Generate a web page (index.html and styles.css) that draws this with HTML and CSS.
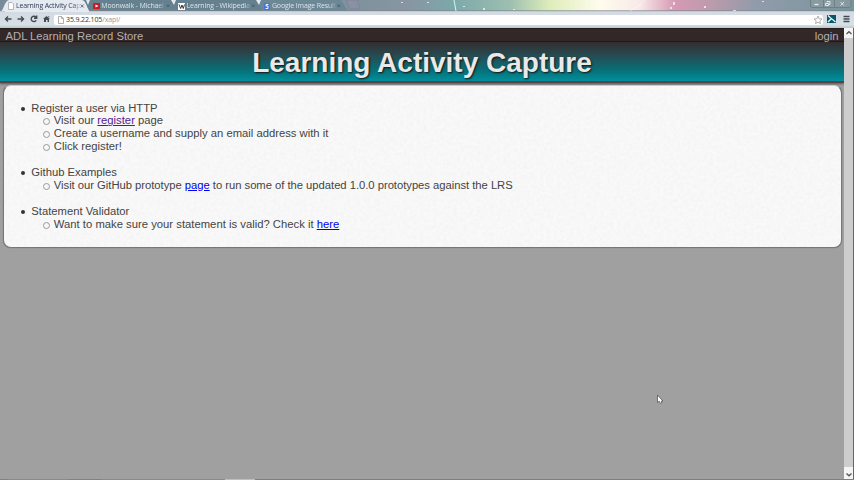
FILE: index.html
```html
<!DOCTYPE html>
<html lang="en">
<head>
<meta charset="utf-8">
<title>Learning Activity Capture</title>
<link rel="stylesheet" href="styles.css">
</head>
<body>
<div class="browser">
  <div class="tabs">
    <svg class="tabs-art" width="854" height="12" viewBox="0 0 854 12" aria-hidden="true">
      <path d="M0 12C4 11 4 1 9 0H82C87 1 87 11 91 12Z" fill="#e6ebf2"/>
      <path d="M91 11.500C87 10 87 2 84 0H172L178 11.500Z" fill="#65818f"/>
      <path d="M178 11.500C174 10 174 2 171 0H257L264 11.500Z" fill="#65818f"/>
      <path d="M264 11.500C260 10 260 2 257 0H341L348 11.500Z" fill="#6c8795"/>
      <path d="M346 0L350 9H360L357 0Z" fill="#8b91a5" stroke="#777f90" stroke-width=".6"/>
      <path d="M86 0L88 5L90 0M171 0L174 5L176 0M256 0L259 5L261 0" fill="#e2eaf0"/>
      <path d="M0 11.500H5M89 11.500H854" stroke="#c3cbd2"/>
      <path d="M89 10.500H854" stroke="#7b878e" stroke-opacity=".6"/>
      <path d="M454 0L456 11" stroke="#d9f5ee"/>
      <g fill="#f5f7f7" fill-opacity=".75"><rect x="401" y="2" width="2" height="1"/><rect x="427" y="2" width="2" height="1"/><rect x="463" y="6" width="2" height="1"/><rect x="483" y="8" width="2" height="2"/><rect x="513" y="9" width="2" height="1"/><rect x="673" y="2" width="2" height="3"/><rect x="670" y="7" width="2" height="2"/><rect x="704" y="6" width="2" height="2"/><rect x="762" y="1" width="2" height="1"/><rect x="733" y="10" width="3" height="1"/></g>
      <path d="M630 11Q640 6 645 0" fill="none" stroke="#fff" stroke-opacity=".5"/>
      <path d="M8.500 2.500H12L13.500 4V9.500H8.500Z" fill="#fff" stroke="#9a9fa5" stroke-width=".7"/>
      <rect x="93" y="3" width="7" height="6" rx="1" fill="#cb171e"/><path d="M95.500 4.500L98.500 6L95.500 7.500Z" fill="#fff"/>
      <rect x="178" y="3" width="7" height="7" fill="#fff"/><path d="M179 4.500L180.700 8.500L182 5L183.300 8.500L184.500 4.500" fill="none" stroke="#222" stroke-width=".9"/>
      <rect x="264" y="3" width="6" height="7" fill="#3c78e8"/><path d="M268.500 4.500H266L266 6H268V8.500H265.500" fill="none" stroke="#fff" stroke-width=".9"/>
      <path d="M80.700 4.500L83.700 7.500M83.700 4.500L80.700 7.500" stroke="#555b63" stroke-width=".9"/>
      <path d="M166.700 4.500L169.200 7M169.200 4.500L166.700 7M252 4.500L254.500 7M254.500 4.500L252 7M337.500 4.500L340 7M340 4.500L337.500 7" stroke="#45545e" stroke-width=".8"/>
      <path d="M810.500 0V6Q810.500 7.500 812 7.500H849Q851 7.500 851 6V0M823.500 0V7M834.500 0V7" fill="#8e9da2" fill-opacity=".6" stroke="#66767b" stroke-width=".7"/>
      <path d="M814.500 4.500H818.500" stroke="#eee" stroke-width="1.300"/>
      <path d="M825.500 3.500H828.500V5.500H825.500ZM827 2.500V1.500H830V4.500H829M840.500 2L844 5.500M844 2L840.500 5.500" fill="none" stroke="#eee" stroke-width=".9"/>
    </svg>
    <span class="tab tab-active">Learning Activity Cap</span>
    <span class="tab">Moonwalk - Michael</span>
    <span class="tab">Learning - Wikipedia</span>
    <span class="tab">Google Image Result</span>
  </div>
  <div class="toolbar">
    <svg class="nav" width="54" height="16" viewBox="0 0 54 16" aria-hidden="true">
      <g fill="none" stroke="#454a50" stroke-width="1.400">
        <path d="M11.500 7H5.500M8 4.500L5.500 7L8 9.500"/>
        <path d="M17.500 7H23.500M21 4.500L23.500 7L21 9.500"/>
        <path d="M36 5.200A2.700 2.700 0 1 0 36.200 8.300M36.700 3.600V6.200H34"/>
      </g>
      <path d="M43 7L46.500 4L50 7H49V10H47.500V8H46V10H44V7ZM48 4H49.200V5.500Z" fill="#454a50"/>
    </svg>
    <div class="address">
      <svg width="8" height="10" viewBox="0 0 8 10" aria-hidden="true"><path d="M1.500 1.500H4.500L6.500 3.500V8.500H1.500ZM4.500 1.500V3.500H6.500" fill="#fff" stroke="#999" stroke-width=".8"/></svg>
      <span class="url">35.9.22.105<span class="path">/xapi/</span></span>
      <svg class="star" width="10" height="10" viewBox="0 0 10 10" aria-hidden="true"><path d="M5 1L6.100 3.700L9 4L6.800 5.900L7.500 8.700L5 7.200L2.500 8.700L3.200 5.900L1 4L3.900 3.700Z" fill="#fff" stroke="#9c9c9c" stroke-width=".8"/></svg>
    </div>
    <svg class="tools" width="31" height="16" viewBox="0 0 31 16" aria-hidden="true">
      <rect x="4" y="3" width="9" height="8" fill="#08566c"/><path d="M5 3.500L7 5.500Q9 7 12.500 10M8.500 6.500L5 10" fill="none" stroke="#eef6f8" stroke-width="1.400"/>
      <path d="M20.500 4.500H26.500M20.500 7H26.500M20.500 9.500H26.500" stroke="#444a50" stroke-width="1.300"/>
    </svg>
  </div>
  <div class="viewport">
    <main class="page">
      <nav class="topbar"><span>ADL Learning Record Store</span><span>login</span></nav>
      <header class="header"><h1>Learning Activity Capture</h1></header>
      <section class="card">
        <svg class="paper" width="100%" height="100%" aria-hidden="true"><filter id="paper" x="0" y="0" width="100%" height="100%"><feTurbulence type="fractalNoise" baseFrequency=".3" numOctaves="3" seed="4"/><feColorMatrix values="0 0 0 0 .5  0 0 0 0 .5  0 0 0 0 .5  .16 0 0 0 -.05"/></filter><rect width="100%" height="100%" filter="url(#paper)"/></svg>
        <ul class="topics">
          <li>Register a user via HTTP
            <ul><li>Visit our <a class="visited" href="#">register</a> page</li><li>Create a username and supply an email address with it</li><li>Click register!</li></ul>
          </li>
          <li>Github Examples
            <ul><li class="wide">Visit our GitHub prototype <a href="#">page</a> to run some of the updated 1.0.0 prototypes against the LRS</li></ul>
          </li>
          <li>Statement Validator
            <ul><li class="loose">Want to make sure your statement is valid? Check it <a href="#">here</a></li></ul>
          </li>
        </ul>
      </section>
    </main>
    <div class="scrollbar">
      <svg width="9" height="10" viewBox="0 0 9 10" aria-hidden="true"><path d="M2.500 6L5 3.700L7.500 6" fill="none" stroke="#555" stroke-width="1.300"/></svg>
      <svg width="9" height="12" viewBox="0 0 9 12" aria-hidden="true"><path d="M2.500 6.500L5 8.800L7.500 6.500" fill="none" stroke="#555" stroke-width="1.300"/></svg>
    </div>
  </div>
  <div class="taskbar"></div>
  <svg class="cursor" width="8" height="11" viewBox="0 0 8 11" aria-hidden="true"><path d="M1.500 1V8.500L3.300 7.300L4.500 9.500L5.800 8.800L5.300 7H7Z" fill="#fff" stroke="#555" stroke-width=".8"/></svg>
</div>
</body>
</html>
```
FILE: styles.css
```css
* { box-sizing: border-box; }
body { margin: 0; overflow: hidden; font-family: "Liberation Sans", Arial, sans-serif; }
.browser { position: relative; display: flex; flex-direction: column; width: 854px; height: 480px; background: #a0a0a0; }
.tabs { position: relative; display: flex; flex: 0 0 12px; padding-left: 16px; background: linear-gradient(90deg, #788b9b 0, #80929e 360px, #8796a2 410px, #7ca9ab 455px, #9dbfb0 510px, #dfedba 550px, #fffced 600px, #f8e9e8 640px, #d599b4 675px, #bd9bac 710px, #919bab 755px, #77959c 854px); }
.tabs-art { position: absolute; left: 0; top: 0; }
.tab { position: relative; width: 85.300px; padding-right: 23px; overflow: hidden; white-space: nowrap; color: #dce4e9; font: 7px/12px "Open Sans", sans-serif; letter-spacing: -.14px; -webkit-mask-image: linear-gradient(90deg, #000 57px, transparent 65px); }
.tab-active { color: #303b56; letter-spacing: -.18px; }
.toolbar { display: flex; align-items: center; flex: 0 0 15px; background: linear-gradient(#d5dae2, #d5e0e7 80%, #b9c6cc); }
.nav { flex: none; }
.address { display: flex; align-items: center; width: 769px; height: 10px; margin-bottom: 1px; padding-left: 3px; border-radius: 2px; background: #fff; }
.url { margin-left: 1px; color: #333; font: 7px/10px "Open Sans", sans-serif; letter-spacing: -.12px; }
.path { color: #999; }
.star { margin-left: auto; }
.tools { flex: none; }
.viewport { display: flex; flex: 1; min-height: 0; border-right: 1px solid #626668; }
.page { flex: 1; background: #a0a0a0; }
.topbar { display: flex; justify-content: space-between; height: 14px; padding: 1px 5.500px 0; border-top: 1px solid #241c1d; border-bottom: 1px solid #1a1516; background: #332728; color: #b5afaf; font-size: 11.250px; line-height: 13px; }
.header { height: 41px; border-bottom: 2px solid #584346; background: linear-gradient(#332d2f, #264c52 35%, #086f78 72%, #00909c); box-shadow: 0 1px 2px #555; text-align: center; }
h1 { margin: 0; color: #ebe8e8; font-size: 28px; line-height: 42px; font-weight: bold; text-shadow: 1px 1px 2px #111; }
.card { position: relative; height: 163px; margin: 2px 2.500px 0 3px; padding-top: 15.500px; overflow: hidden; border: 1px solid #777; border-top-color: #ccc; border-radius: 8px; background: #f9f9f9; box-shadow: 0 0 1px #666; color: #444; font-size: 11.250px; line-height: 12.900px; }
.paper { position: absolute; inset: 0; }
.topics { position: relative; margin: 0; padding-left: 27.300px; }
.topics li { position: relative; list-style: none; }
.topics > li { margin-bottom: 12.900px; }
.topics ul { margin: 0; padding-left: 22.500px; }
.topics li::before { content: ""; position: absolute; left: -10px; top: 5px; width: 4px; height: 4px; border-radius: 50%; background: #333; }
.topics ul li::before { left: -10.500px; width: 5px; height: 5px; top: 4px; border: 1px solid #999; background: none; }
.wide { letter-spacing: -.027px; }
.loose { letter-spacing: .015px; }
a { color: #0000ee; }
.visited { color: #551a8b; }
.scrollbar { display: flex; flex-direction: column; justify-content: space-between; width: 9px; background: #cdcdcd; }
.scrollbar svg { background: #f5f5f5; }
.taskbar { flex: 0 0 1px; background: linear-gradient(90deg, #71859a 0 8px, #8e8793 8px 68px, #71859a 68px 101px, #8e8793 101px 225px, #c7bcb7 225px 255px, #748290 255px); }
.cursor { position: absolute; left: 656px; top: 394px; }
```
